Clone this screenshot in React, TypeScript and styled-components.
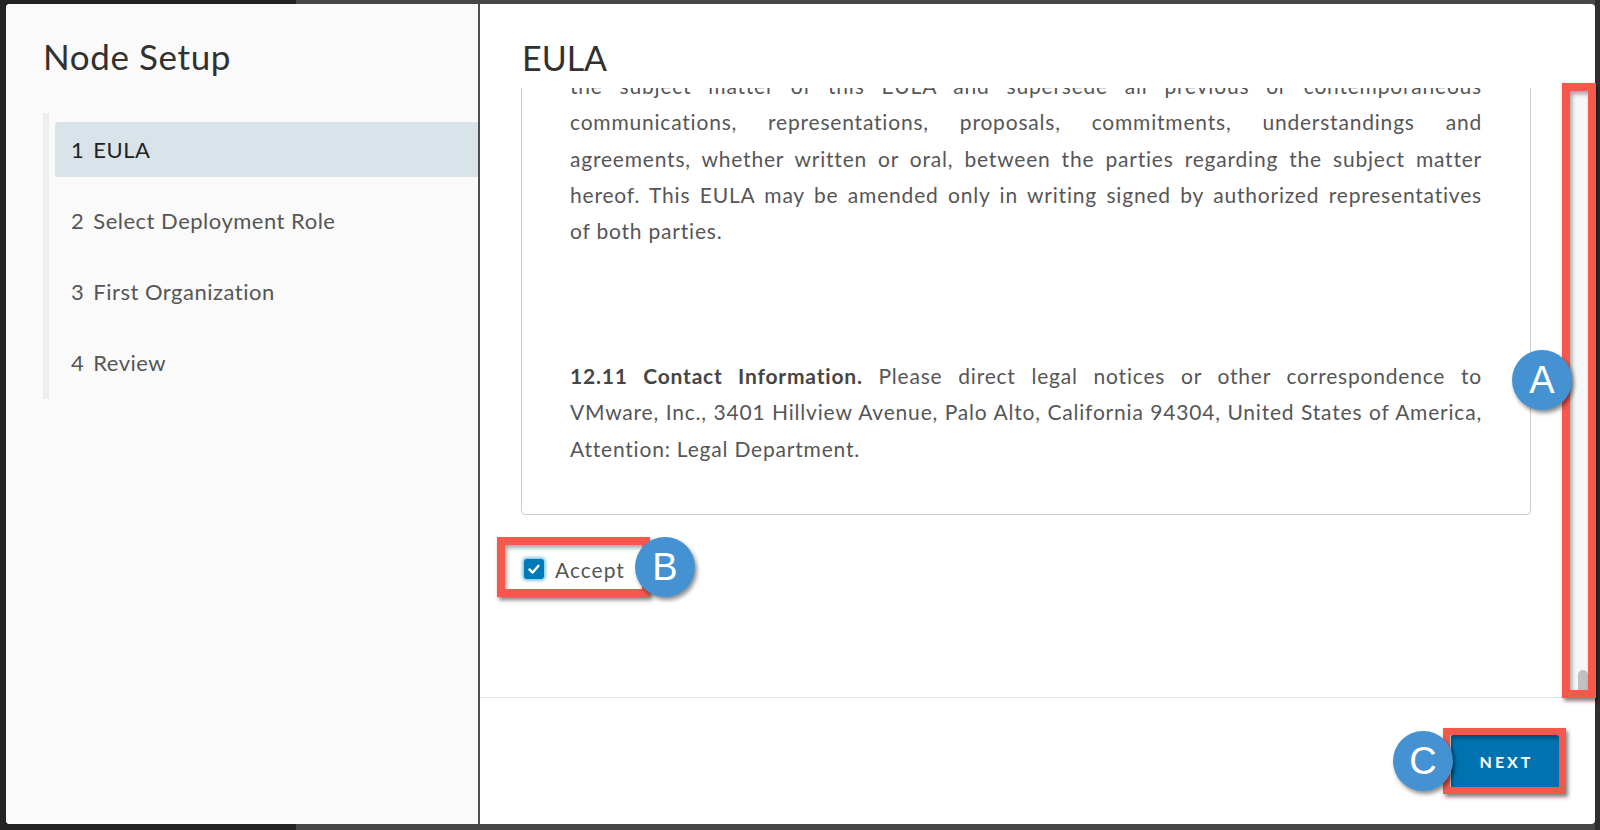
import React from 'react';
import styled, { createGlobalStyle } from 'styled-components';

const GlobalStyle = createGlobalStyle`
  html, body {
    margin: 0;
    padding: 0;
  }
  body {
    background: linear-gradient(to right, #232323 0 296px, #474747 296px 1595px, #2e2e2e 1595px);
    font-family: Lato, 'Open Sans', sans-serif;
  }
`;

const Page = styled.div`
  position: relative;
  width: 1600px;
  height: 830px;
  box-sizing: border-box;
  padding: 4px 5px 6px 6px;
`;

const Dialog = styled.div`
  display: flex;
  height: 100%;
  border-radius: 4px;
  overflow: hidden;
  background: #fff;
`;

/* left side: wizard steps */
const Sidebar = styled.aside`
  width: 472px;
  flex-shrink: 0;
  background: #fafafa;
  padding: 32px 0 0 37px;
  box-sizing: border-box;
`;

const SideTitle = styled.h1`
  margin: 0;
  font-size: 35px;
  line-height: 40px;
  font-weight: 400;
  letter-spacing: 0.6px;
  color: #313131;
`;

const StepList = styled.nav`
  margin-top: 37px;
  padding: 9px 0;
  border-left: 6px solid #eeeeee;
  display: flex;
  flex-direction: column;
  gap: 16px;
`;

const Step = styled.div<{ $active?: boolean }>`
  margin-left: 6px;
  height: 55px;
  display: flex;
  align-items: center;
  padding-left: 16px;
  border-radius: 3px 0 0 3px;
  font-size: 22px;
  letter-spacing: 0.5px;
  color: ${(p) => (p.$active ? '#222' : '#565656')};
  background: ${(p) => (p.$active ? '#d9e4ea' : 'transparent')};
`;

const StepNo = styled.span`
  margin-right: 9px;
`;

/* right side */
const Main = styled.section`
  flex: 1;
  display: flex;
  flex-direction: column;
  border-left: 2px solid #4e4e4e;
  min-width: 0;
`;

const Header = styled.header`
  height: 84px;
  flex-shrink: 0;
  box-sizing: border-box;
  padding: 34px 0 0 42px;
`;

const Title = styled.h2`
  margin: 0;
  font-size: 34px;
  line-height: 40px;
  font-weight: 400;
  color: #313131;
`;

const Body = styled.div`
  flex: 1;
  display: flex;
  min-height: 0;
`;

const Scroller = styled.div`
  flex: 1;
  display: flex;
  flex-direction: column;
  justify-content: flex-end;
  overflow: hidden;
  padding: 0 38px 106px 41px;
`;

const Track = styled.div`
  width: 26px;
  flex-shrink: 0;
  background: #f7f7f7;
  border-left: 1px solid #e6e6e6;
  box-sizing: border-box;
  display: flex;
  flex-direction: column;
  justify-content: flex-end;
  align-items: flex-end;
  padding: 0 7px 7px 0;
`;

const Thumb = styled.div`
  width: 10px;
  height: 20px;
  border-radius: 5px 5px 0 0;
  background: #c1c1c1;
`;

const EulaBox = styled.div`
  flex-shrink: 0;
  border: 1px solid #cccccc;
  border-radius: 4px;
  padding: 40px 48px 47px 48px;
  font-size: 21px;
  line-height: 36.4px;
  letter-spacing: 0.8px;
  color: #565656;
`;

const Para = styled.p<{ $top?: number }>`
  margin: ${(p) => p.$top ?? 0}px 0 0;
`;

const Line = styled.span<{ $last?: boolean }>`
  display: block;
  white-space: nowrap;
  text-align: ${(p) => (p.$last ? 'left' : 'justify')};
  text-align-last: ${(p) => (p.$last ? 'left' : 'justify')};
`;

const Strong = styled.b`
  font-weight: 700;
  color: #454545;
`;

const AcceptRow = styled.label`
  flex-shrink: 0;
  margin-top: 32px;
  height: 44px;
  display: flex;
  align-items: center;
  gap: 11px;
  padding-left: 3px;
  font-size: 21px;
  letter-spacing: 1px;
  color: #565656;
`;

const Check = styled.span`
  width: 20px;
  height: 20px;
  border-radius: 3px;
  background: #0079b8;
  box-shadow: 0 0 3px 2px rgba(73, 175, 217, 0.65);
  display: flex;
  align-items: center;
  justify-content: center;
`;

const Footer = styled.footer`
  height: 127px;
  flex-shrink: 0;
  border-top: 1px solid #dde3e8;
  box-sizing: border-box;
  display: flex;
  align-items: center;
  justify-content: flex-end;
  padding-right: 36px;
`;

const NextButton = styled.button`
  width: 108px;
  height: 53px;
  border: none;
  border-radius: 2px;
  background: #0072b0;
  color: #fff;
  font-family: Lato, sans-serif;
  font-size: 16px;
  font-weight: 700;
  letter-spacing: 3px;
  padding: 0 0 0 3px;
`;

/* annotation overlays */
const Frame = styled.div<{ $x: number; $y: number; $w: number; $h: number; $b?: number }>`
  position: absolute;
  left: ${(p) => p.$x}px;
  top: ${(p) => p.$y}px;
  width: ${(p) => p.$w}px;
  height: ${(p) => p.$h}px;
  box-sizing: border-box;
  border: ${(p) => p.$b ?? 8}px solid #f6584b;
  box-shadow: 2px 3px 4px rgba(0, 0, 0, 0.5), inset 2px 3px 4px rgba(0, 0, 0, 0.35);
`;

const Badge = styled.div<{ $x: number; $y: number }>`
  position: absolute;
  left: ${(p) => p.$x - 30}px;
  top: ${(p) => p.$y - 30}px;
  width: 60px;
  height: 60px;
  border-radius: 50%;
  background: #4592d2;
  color: #fff;
  font-family: 'Liberation Sans', Arial, sans-serif;
  font-size: 38px;
  display: flex;
  align-items: center;
  justify-content: center;
  box-shadow: 2px 3px 4px rgba(0, 0, 0, 0.45);
`;

const steps = ['EULA', 'Select Deployment Role', 'First Organization', 'Review'];

export default function App() {
  return (
    <>
      <GlobalStyle />
      <Page>
        <Dialog>
          <Sidebar>
            <SideTitle>Node Setup</SideTitle>
            <StepList>
              {steps.map((s, i) => (
                <Step key={s} $active={i === 0}>
                  <StepNo>{i + 1}</StepNo>
                  {s}
                </Step>
              ))}
            </StepList>
          </Sidebar>

          <Main>
            <Header>
              <Title>EULA</Title>
            </Header>
            <Body>
              <Scroller>
                <EulaBox>
                  <Para>
                    <Line>
                      <Strong>12.10 Entire Agreement.</Strong> This EULA, including accepted purchase orders and
                    </Line>
                    <Line>any Order Form, is the entire agreement between the parties with respect to</Line>
                    <Line>the subject matter of this EULA and supersede all previous or contemporaneous</Line>
                    <Line>communications, representations, proposals, commitments, understandings and</Line>
                    <Line>agreements, whether written or oral, between the parties regarding the subject matter</Line>
                    <Line>hereof. This EULA may be amended only in writing signed by authorized representatives</Line>
                    <Line $last>of both parties.</Line>
                  </Para>
                  <Para $top={108}>
                    <Line>
                      <Strong>12.11 Contact Information.</Strong> Please direct legal notices or other correspondence to
                    </Line>
                    <Line>VMware, Inc., 3401 Hillview Avenue, Palo Alto, California 94304, United States of America,</Line>
                    <Line $last>Attention: Legal Department.</Line>
                  </Para>
                </EulaBox>
                <AcceptRow>
                  <Check>
                    <svg width="14" height="14" viewBox="0 0 14 14">
                      <polyline points="2.5,7.5 5.8,10.5 11.5,3.8" fill="none" stroke="#fff" strokeWidth="2.4" strokeLinecap="round" strokeLinejoin="round" />
                    </svg>
                  </Check>
                  Accept
                </AcceptRow>
              </Scroller>
              <Track>
                <Thumb />
              </Track>
            </Body>
            <Footer>
              <NextButton>NEXT</NextButton>
            </Footer>
          </Main>
        </Dialog>

        <Frame $x={1562} $y={83} $w={34} $h={615} />
        <Frame $x={497} $y={537} $w={153} $h={60} />
        <Frame $x={1443} $y={728} $w={123} $h={66} $b={7} />
        <Badge $x={1542} $y={380}>A</Badge>
        <Badge $x={665} $y={567}>B</Badge>
        <Badge $x={1423} $y={761}>C</Badge>
      </Page>
    </>
  );
}
